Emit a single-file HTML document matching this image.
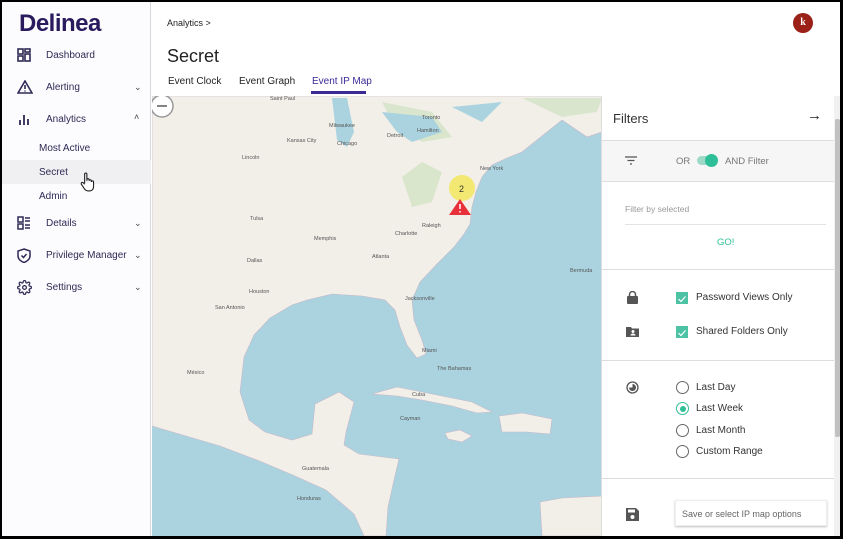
<!DOCTYPE html>
<html><head><meta charset="utf-8">
<style>
*{margin:0;padding:0;box-sizing:border-box}
body{width:843px;height:539px;overflow:hidden;background:#000;font-family:"Liberation Sans",sans-serif;position:relative}
#app{position:absolute;left:2px;top:2px;width:838px;height:534px;background:#fff;overflow:hidden}
#side{position:absolute;left:0;top:0;width:149px;height:534px;background:#fcfcfe;border-right:1px solid #d8d8dc}
.logo{position:absolute;left:17px;top:8px;font-size:24px;font-weight:bold;color:#2a1a5e;letter-spacing:-0.5px}
.nav{position:absolute;left:0;width:149px;height:24px;font-size:10px;color:#2e2a55}
.nav .ic{position:absolute;left:15px;top:4px}
.nav .t{position:absolute;left:44px;top:6px}
.nav .ch{position:absolute;left:132px;top:6px;font-size:9px;color:#444}
.sub{position:absolute;left:0;width:149px;height:24px;font-size:10px;color:#2e2a55}
.sub span{position:absolute;left:37px;top:7px}
.map{position:absolute;left:150px;top:94px;width:449px;height:440px;background:#aad3df;overflow:hidden}
.panel{position:absolute;left:599px;top:94px;width:233px;height:440px;background:#fff;border-left:1px solid #ddd}
.sep{position:absolute;left:0;width:233px;height:1px;background:#ddd}
.lbl{position:absolute;font-size:10px;color:#333}
.cb{position:absolute;width:12px;height:12px;background:#4dc2a4;left:74px}
.rd{position:absolute;width:13px;height:13px;border:1.3px solid #666;border-radius:50%;left:74px}
</style></head><body>
<div id="app">
<div id="side">
 <div class="logo">Delinea</div>
 <div class="nav" style="top:42px"><svg class="ic" width="14" height="14" viewBox="0 0 14 14" fill="none" stroke="#2e2a55" stroke-width="1.6"><rect x="1" y="1" width="5" height="5"/><rect x="8" y="1" width="5" height="3"/><rect x="1" y="8" width="5" height="5"/><rect x="8" y="6" width="5" height="7"/></svg><span class="t">Dashboard</span></div>
 <div class="nav" style="top:74px"><svg class="ic" width="16" height="14" viewBox="0 0 16 14" fill="none" stroke="#2e2a55" stroke-width="1.6"><path d="M8 1L15 13H1Z"/><path d="M8 5v4M8 10.5v1"/></svg><span class="t">Alerting</span><span class="ch">⌄</span></div>
 <div class="nav" style="top:106px"><svg class="ic" width="14" height="14" viewBox="0 0 14 14" stroke="#2e2a55" stroke-width="1.8"><path d="M3 13V8M7 13V3M11 13V7"/></svg><span class="t">Analytics</span><span class="ch" style="top:4px">˄</span></div>
 <div class="sub" style="top:134px"><span>Most Active</span></div>
 <div class="sub" style="top:158px;background:#f0f0f2"><span>Secret</span><svg style="position:absolute;left:77px;top:12px" width="18" height="20" viewBox="0 0 16 18" fill="#fff" stroke="#222" stroke-width="1"><path d="M5 10V2a1 1 0 012 0v6 M7 7a1 1 0 012 0v1 M9 8a1 1 0 012 0v1 M11 9a1 1 0 012 0v4c0 3-2 4-4 4H8c-2 0-3-1-4-3L2 11a1 1 0 012-1l1 1"/></svg></div>
 <div class="sub" style="top:182px"><span>Admin</span></div>
 <div class="nav" style="top:210px"><svg class="ic" width="14" height="14" viewBox="0 0 14 14" fill="none" stroke="#2e2a55" stroke-width="1.5"><rect x="1" y="1" width="5" height="5"/><rect x="1" y="8" width="5" height="5"/><path d="M8 2h5M8 5h5M8 9h5M8 12h5"/></svg><span class="t">Details</span><span class="ch">⌄</span></div>
 <div class="nav" style="top:242px"><svg class="ic" width="14" height="15" viewBox="0 0 14 15" fill="none" stroke="#2e2a55" stroke-width="1.5"><path d="M7 1L13 3v5c0 3-3 5.5-6 6.5C4 13.5 1 11 1 8V3Z"/><path d="M4.5 7.5l2 2 3-3.5"/></svg><span class="t">Privilege Manager</span><span class="ch">⌄</span></div>
 <div class="nav" style="top:274px"><svg class="ic" width="15" height="15" viewBox="0 0 24 24" fill="none" stroke="#2e2a55" stroke-width="2"><circle cx="12" cy="12" r="3"/><path d="M19.4 15a1.7 1.7 0 00.3 1.8l.1.1a2 2 0 11-2.8 2.8l-.1-.1a1.7 1.7 0 00-1.8-.3 1.7 1.7 0 00-1 1.5V21a2 2 0 01-4 0v-.1A1.7 1.7 0 009 19.4a1.7 1.7 0 00-1.8.3l-.1.1a2 2 0 11-2.8-2.8l.1-.1a1.7 1.7 0 00.3-1.8 1.7 1.7 0 00-1.5-1H3a2 2 0 010-4h.1A1.7 1.7 0 004.6 9a1.7 1.7 0 00-.3-1.8l-.1-.1a2 2 0 112.8-2.8l.1.1a1.7 1.7 0 001.8.3H9a1.7 1.7 0 001-1.5V3a2 2 0 014 0v.1a1.7 1.7 0 001 1.5 1.7 1.7 0 001.8-.3l.1-.1a2 2 0 112.8 2.8l-.1.1a1.7 1.7 0 00-.3 1.8V9a1.7 1.7 0 001.5 1H21a2 2 0 010 4h-.1a1.7 1.7 0 00-1.5 1z"/></svg><span class="t">Settings</span><span class="ch">⌄</span></div>
</div>
<div style="position:absolute;left:165px;top:16px;font-size:9px;color:#222">Analytics &gt;</div>
<div style="position:absolute;left:791px;top:11px;width:20px;height:20px;border-radius:50%;background:#9b2017;color:#fff;font-size:10px;font-weight:bold;text-align:center;line-height:20px;font-family:'Liberation Serif',serif">k</div>
<div style="position:absolute;left:165px;top:44px;font-size:18px;color:#222">Secret</div>
<div style="position:absolute;left:166px;top:74px;font-size:10px;color:#222">Event Clock</div>
<div style="position:absolute;left:237px;top:74px;font-size:10px;color:#222">Event Graph</div>
<div style="position:absolute;left:310px;top:74px;font-size:10px;color:#3b2a96">Event IP Map</div>
<div style="position:absolute;left:309px;top:89px;width:55px;height:3px;background:#3b2a96"></div>
<div class="map">
<svg width="449" height="440" viewBox="150 94 449 440">
<g fill="#f2efe9" stroke="#c9b8c9" stroke-width="0.6">
<path d="M150 94H600V130L585 135 560 118 545 130 530 142 520 150 505 156 490 163 480 175 474 190 470 205 468 222 462 232 452 245 435 262 418 280 410 298 412 318 420 338 424 352 415 356 405 343 398 325 393 308 383 298 360 294 330 292 305 298 290 303 268 316 252 333 242 355 238 390 247 418 263 430 290 438 310 432 313 402 337 390 352 400 344 430 342 443 357 452 397 457 392 478 386 505 384 534H362L352 512 324 488 293 474 260 460 218 444 184 434 150 424Z"/>
<path d="M370 392 395 385 430 392 470 400 490 410 475 411 450 404 420 398 395 394Z"/>
<path d="M497 414 520 411 550 417 548 432 525 430 500 430Z"/>
<path d="M443 431 458 428 470 434 460 440 446 437Z"/>
<path d="M538 500 560 496 600 494V534H540Z"/>
</g>
<g fill="#cfe3c0" opacity="0.7"><path d="M400 175 420 160 440 170 430 200 410 205Z"/><path d="M380 100 430 110 450 135 420 140 390 120Z"/><path d="M520 96 600 96 595 110 560 115Z"/></g>
<g fill="#aad3df"><path d="M330 96 345 96 352 130 345 145 335 138Z"/><path d="M380 110 430 115 440 130 410 140 395 130Z"/><path d="M450 105 500 100 480 120Z"/></g>
<g font-size="5.5" fill="#555" font-family="Liberation Sans"><text x="285" y="140">Kansas City</text><text x="240" y="157" >Lincoln</text><text x="335" y="143">Chicago</text><text x="385" y="135">Detroit</text><text x="415" y="130">Hamilton</text><text x="420" y="117">Toronto</text><text x="478" y="168">New York</text><text x="420" y="225">Raleigh</text><text x="393" y="233">Charlotte</text><text x="370" y="256">Atlanta</text><text x="245" y="260">Dallas</text><text x="247" y="291">Houston</text><text x="213" y="307">San Antonio</text><text x="403" y="298">Jacksonville</text><text x="420" y="350">Miami</text><text x="435" y="368">The Bahamas</text><text x="410" y="394">Cuba</text><text x="295" y="498">Honduras</text><text x="300" y="468">Guatemala</text><text x="398" y="418">Cayman</text><text x="312" y="238">Memphis</text><text x="248" y="218">Tulsa</text><text x="185" y="372">México</text><text x="568" y="270">Bermuda</text><text x="268" y="98">Saint Paul</text><text x="327" y="125">Milwaukee</text></g>
<circle cx="160" cy="104" r="11" fill="#fff" stroke="#999" stroke-width="1.5"/><path d="M155 104h10" stroke="#333" stroke-width="1.2"/>
<circle cx="460" cy="186" r="13" fill="#f2e64a" opacity="0.75"/><text x="457" y="190" font-size="9" fill="#333">2</text>
<path d="M458 197 469 213H447Z" fill="#e8303a"/><path d="M458 202v5M458 209v1.5" stroke="#fff" stroke-width="1.5"/>
</svg>
</div>
<div class="panel">
 <div style="position:absolute;left:11px;top:15px;font-size:13px;color:#333">Filters</div>
 <div style="position:absolute;left:205px;top:11px;font-size:15px;color:#222">→</div>
 <div class="sep" style="top:44px"></div>
 <div style="position:absolute;left:0;top:45px;width:233px;height:40px;background:#f6f6f6"></div>
 <svg style="position:absolute;left:23px;top:60px" width="12" height="9"><path d="M0 1h12M2.5 4.5h7M5 8h2" stroke="#555" stroke-width="1.3"/></svg>
 <div class="lbl" style="left:74px;top:60px;font-size:9.5px;color:#777">OR</div>
 <div style="position:absolute;left:95px;top:60px;width:20px;height:9px;border-radius:5px;background:#9ed9c8"></div>
 <div style="position:absolute;left:103px;top:58px;width:13px;height:13px;border-radius:50%;background:#2fbf98"></div>
 <div class="lbl" style="left:123px;top:60px;font-size:9.5px;color:#777">AND Filter</div>
 <div class="sep" style="top:85px"></div>
 <div class="lbl" style="left:23px;top:108px;font-size:8.5px;color:#999">Filter by selected</div>
 <div style="position:absolute;left:23px;top:128px;width:201px;height:1px;background:#e3e3e3"></div>
 <div class="lbl" style="left:115px;top:141px;font-size:9.5px;color:#2fbf98">GO!</div>
 <div class="sep" style="top:173px"></div>
 <svg style="position:absolute;left:25px;top:195px" width="11" height="13"><rect x="0" y="5" width="11" height="8" rx="1" fill="#555"/><path d="M2.5 5V3.5a3 3 0 016 0V5" stroke="#555" stroke-width="1.5" fill="none"/></svg>
 <div class="cb" style="top:196px"><svg width="12" height="12"><path d="M2.5 6l2.5 2.5 4.5-5" stroke="#fff" stroke-width="1.2" fill="none"/></svg></div><div class="lbl" style="left:94px;top:196px">Password Views Only</div>
 <svg style="position:absolute;left:24px;top:230px" width="13" height="11"><path d="M0 1h5l1 1.5h7V11H0Z" fill="#555"/><circle cx="7" cy="5.5" r="1.5" fill="#fff"/><path d="M4.5 9.5a2.5 2 0 015 0Z" fill="#fff"/></svg>
 <div class="cb" style="top:230px"><svg width="12" height="12"><path d="M2.5 6l2.5 2.5 4.5-5" stroke="#fff" stroke-width="1.2" fill="none"/></svg></div><div class="lbl" style="left:94px;top:230px">Shared Folders Only</div>
 <div class="sep" style="top:264px"></div>
 <svg style="position:absolute;left:24px;top:285px" width="13" height="13"><circle cx="6.5" cy="6.5" r="5.5" fill="none" stroke="#555" stroke-width="1.3"/><path d="M6.5 3a3.5 3.5 0 11-3.5 3.5h3.5Z" fill="#555"/></svg>
 <div class="rd" style="top:285px"></div><div class="lbl" style="left:94px;top:286px">Last Day</div>
 <div class="rd" style="top:306px;border-color:#2fbf98"><div style="position:absolute;left:2.5px;top:2.5px;width:6px;height:6px;border-radius:50%;background:#2fbf98"></div></div><div class="lbl" style="left:94px;top:307px">Last Week</div>
 <div class="rd" style="top:328px"></div><div class="lbl" style="left:94px;top:329px">Last Month</div>
 <div class="rd" style="top:349px"></div><div class="lbl" style="left:94px;top:350px">Custom Range</div>
 <div class="sep" style="top:382px"></div>
 <svg style="position:absolute;left:24px;top:412px" width="13" height="13"><path d="M0 0h10l3 3v10H0Z" fill="#555"/><rect x="2" y="1.5" width="7" height="3" fill="#fff"/><circle cx="6.5" cy="9" r="2" fill="#fff"/></svg>
 <div style="position:absolute;left:73px;top:404px;width:152px;height:26px;background:#fff;box-shadow:0 1px 2px rgba(0,0,0,.25);border:1px solid #eee"></div>
 <div class="lbl" style="left:80px;top:413px;font-size:9px;color:#666">Save or select IP map options</div>
</div>
<div style="position:absolute;left:832px;top:94px;width:6px;height:440px;background:#f1f1f1"></div>
<div style="position:absolute;left:833px;top:117px;width:5px;height:318px;background:#c1c1c1;border-radius:2px"></div>
</div>
</body></html>
